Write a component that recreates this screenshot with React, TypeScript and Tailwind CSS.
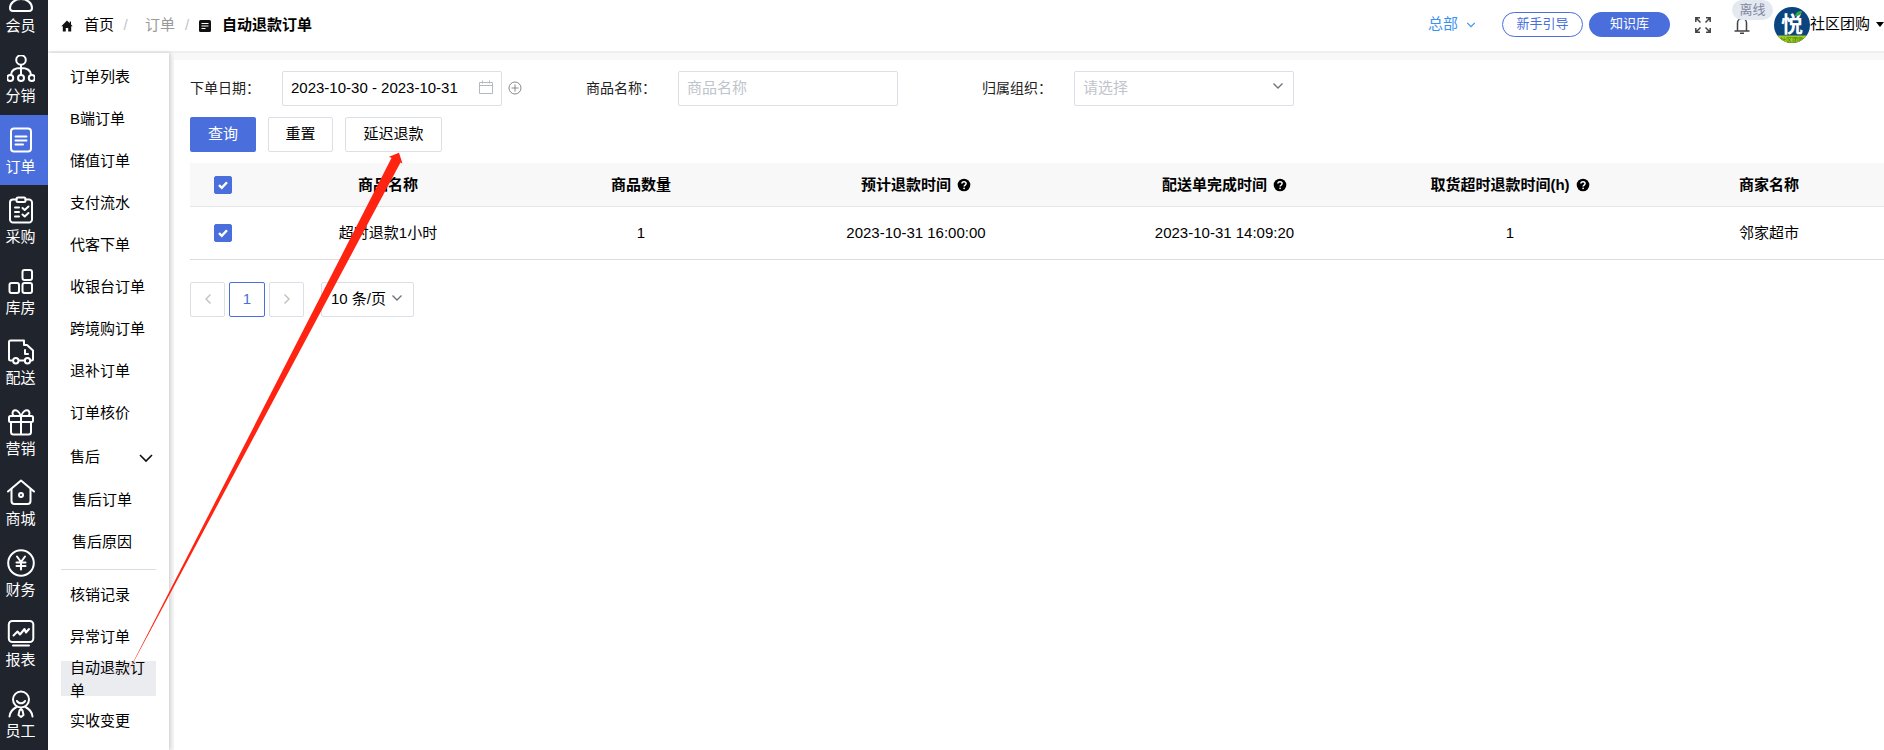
import React from 'react'

type IconProps = { className?: string }

const Line = ({ children }: { children: React.ReactNode }) => (
  <svg viewBox="0 0 28 28" className="size-7 shrink-0" fill="none" stroke="currentColor" strokeWidth="2" strokeLinecap="round" strokeLinejoin="round" aria-hidden="true">
    {children}
  </svg>
)

const modules: { label: string; active?: boolean; icon: React.ReactNode }[] = [
  { label: '会员', icon: <><circle cx="14" cy="7" r="4.500" /><path d="M6 26c-2 0-3-1-3-3 0-5 5-9 11-9s11 4 11 9c0 2-1 3-3 3z" /></> },
  { label: '分销', icon: <><circle cx="14" cy="5" r="4.800" /><path d="M14 10v10M4 19.500c.5-5 5-6.500 10-6.500s9.500 1.500 10 6.500" /><circle cx="3.200" cy="23" r="3" /><circle cx="14" cy="23" r="3" /><circle cx="24.800" cy="23" r="3" /></> },
  { label: '订单', active: true, icon: <><rect x="4" y="2.500" width="20" height="23" rx="3" /><path d="M8.500 10.500h11M8.500 14.500h11M8.500 18.500h7.500" /></> },
  { label: '采购', icon: <><path d="M9.500 3.500H6A3 3 0 0 0 3 6.500v17a3 3 0 0 0 3 3h16a3 3 0 0 0 3-3v-17a3 3 0 0 0-3-3h-3.500" /><rect x="9.500" y="1.500" width="9" height="4.500" rx="1.500" /><path d="M8 11.500h4M8 16h4M8 20.500h4M15.500 12l2.200 2 3.800-3.500M15.500 18.500l2.200 2 3.800-3.500" /></> },
  { label: '库房', icon: <><rect x="15.500" y="3" width="9.500" height="10" rx="2" /><rect x="2.500" y="16" width="9.500" height="10" rx="2" /><rect x="15.500" y="16" width="9.500" height="10" rx="2" /></> },
  { label: '配送', icon: <><path d="M5 23.500H3.500A1.500 1.500 0 0 1 2 22V5a1.500 1.500 0 0 1 1.500-1.500H17V8h3l6 5.500V22a1.500 1.500 0 0 1-1.500 1.500H24M12 23.500h5.500" /><circle cx="8.800" cy="23.800" r="2.700" /><circle cx="20.500" cy="23.800" r="2.700" /><path d="M18 13v4h3" /></> },
  { label: '营销', icon: <><rect x="2" y="8" width="24" height="6" rx="1.500" /><path d="M4 14v10a2.500 2.500 0 0 0 2.500 2.500h15A2.500 2.500 0 0 0 24 24V14M14 8v18.500M14 8C12 3 9 1.500 7 2.500S5 7 7 8M14 8c2-5 5-6.500 7-5.500S23 7 21 8" /></> },
  { label: '商城', icon: <><path d="M1 13.500L14 2.500l13 11" /><path d="M4.500 11v12a3 3 0 0 0 3 3h13a3 3 0 0 0 3-3V11" /><circle cx="14" cy="17" r="2" /></> },
  { label: '财务', icon: <><circle cx="14" cy="14" r="12.800" /><path d="M10 7.500l4 5.500 4-5.500M14 13v7.500M9.500 13.500h9M9.500 17h9" /></> },
  { label: '报表', icon: <><rect x="1.800" y="2" width="24.500" height="21" rx="3.500" /><path d="M6.500 16.500l4-4 2.500 3 4.500-5.500 1.500 3.500 3-3.500M6 26.500h16" /></> },
  { label: '员工', icon: <><circle cx="14" cy="9.500" r="8" /><path d="M10 11c1.500 3 6.500 3 8 0M9.500 17c-4 2-6.500 5-7 9.500M18.500 17c4 2 6.500 5 7 9.500M14 19l-1.500 1.500-1 4.500 2.500 2 2.500-2-1-4.500z" /></> },
]

const Chevron = ({ className }: IconProps) => (
  <svg viewBox="0 0 12 12" className={className} fill="none" stroke="currentColor" strokeWidth="1.400" aria-hidden="true">
    <path d="M1.500 3.500L6 8l4.500-4.500" />
  </svg>
)

const Help = () => (
  <svg viewBox="0 0 14 14" className="ml-1.5 inline-block size-3.5 align-[-2px]" aria-hidden="true">
    <circle cx="7" cy="7" r="6.300" fill="#000" />
    <path d="M4.900 5.600c0-2.600 4.200-2.600 4.200 0 0 1.500-2 1.400-2 3" fill="none" stroke="#fff" strokeWidth="1.500" />
    <circle cx="7.100" cy="10.300" r=".9" fill="#fff" />
  </svg>
)

const topLinks = ['订单列表', 'B端订单', '储值订单', '支付流水', '代客下单', '收银台订单', '跨境购订单', '退补订单', '订单核价']
const bottomLinks = ['核销记录', '异常订单', '自动退款订单', '实收变更']

const SubLink = ({ label, active, nested }: { label: string; active?: boolean; nested?: boolean }) => (
  <a
    href="#"
    aria-current={active ? 'page' : undefined}
    className={`flex h-[35px] items-center pr-1 leading-[23px] ${nested ? 'pl-[11px]' : 'pl-[9px]'} ${active ? 'bg-[#ebecf0]' : ''}`}
  >
    {label}
  </a>
)

const Check = ({ label }: { label: string }) => (
  <span className="relative inline-block size-[18px] align-middle">
    <input type="checkbox" defaultChecked aria-label={label} className="peer block size-[18px] appearance-none rounded-xs border border-[#dcdfe6] bg-white checked:border-[#4a6fdc] checked:bg-[#4a6fdc]" />
    <svg viewBox="0 0 18 18" className="pointer-events-none absolute inset-0 hidden size-[18px] peer-checked:block" fill="none" stroke="#fff" strokeWidth="2.400" aria-hidden="true">
      <path d="M5 9.200l2.800 2.600L13 6.200" />
    </svg>
  </span>
)

const columns = [
  { title: '商品名称' },
  { title: '商品数量' },
  { title: '预计退款时间', help: true },
  { title: '配送单完成时间', help: true },
  { title: '取货超时退款时间(h)', help: true },
  { title: '商家名称' },
]
const rows = [['超时退款1小时', '1', '2023-10-31 16:00:00', '2023-10-31 14:09:20', '1', '邻家超市']]

const field = 'block h-[35px] w-[220px] rounded-xs border border-[#dcdfe6] bg-white px-2 text-[15px] outline-none'
const plain = 'h-[35px] rounded-xs border border-[#dcdfe6] bg-white'

export default function App() {
  return (
    <div className="relative flex h-screen overflow-hidden bg-white font-['Liberation_Sans','Noto_Sans_CJK_SC',sans-serif] text-[15px] text-black">
      <aside className="w-12 shrink-0 overflow-hidden bg-[#20242d] text-white">
        <nav aria-label="模块" className="-mt-[26px] flex min-h-[775px] flex-col">
          {modules.map((m) => (
            <a key={m.label} href="#" className={`flex flex-1 flex-col items-center gap-0.5 pt-[11px] pr-[7px] leading-[22px] ${m.active ? 'bg-[#4a6fdc]' : ''}`}>
              <Line>{m.icon}</Line>
              <span>{m.label}</span>
            </a>
          ))}
        </nav>
      </aside>

      <div className="flex min-w-0 flex-1 flex-col">
        <header className="flex h-[53px] shrink-0 items-center justify-between border-b-2 border-[#f0f0f0] bg-white pb-2 pl-[13px]">
          <nav aria-label="面包屑" className="flex items-center pt-2">
            <svg viewBox="0 0 12 12" className="mr-[11px] size-3" aria-hidden="true">
              <path d="M6 .5L.3 6.200h1.500V11.500h3V8h2.400v3.500h3V6.200h1.500L10 4.500V1.500H8.700v1.700z" fill="#111" />
            </svg>
            <a href="#">首页</a>
            <span className="w-[31px] pr-2 text-center text-[#c0c4cc]">/</span>
            <a href="#" className="text-[#999]">订单</a>
            <span className="w-6 text-center text-[#c0c4cc]">/</span>
            <svg viewBox="0 0 12 12" className="mr-[11px] size-3" aria-hidden="true">
              <rect width="12" height="12" rx="1.500" fill="#111" />
              <path d="M2.500 3.500h7M2.500 6h7M2.500 8.500h4" stroke="#fff" strokeWidth="1.200" />
            </svg>
            <span className="font-bold">自动退款订单</span>
          </nav>

          <div className="flex items-center pt-1.5">
            <button type="button" className="mr-[26px] flex items-center gap-2 text-[#3c92ee]">
              总部
              <Chevron className="size-[10px]" />
            </button>
            <button type="button" className="mr-1.5 h-[25px] w-[81px] rounded-full border border-[#4a6fdc] pb-0.5 text-[13px] leading-none text-[#4a6fdc]">新手引导</button>
            <button type="button" className="mr-[25px] h-[25px] w-[81px] rounded-full bg-[#4a6fdc] pb-0.5 text-[13px] leading-none text-white">知识库</button>
            <button type="button" aria-label="全屏" className="mr-[23px]">
              <svg viewBox="0 0 16 16" className="size-4" fill="none" stroke="#444" strokeWidth="1.500" aria-hidden="true">
                <path d="M.8 5V.8H5M11 .8h4.200V5M15.200 11v4.200H11M5 15.200H.8V11M.8.8l4.700 4.700M15.200.8l-4.700 4.700M15.200 15.200l-4.700-4.700M.8 15.200l4.700-4.700" />
              </svg>
            </button>
            <button type="button" aria-label="通知" className="relative mr-6">
              <svg viewBox="0 0 16 18" className="h-[18px] w-4" fill="none" stroke="#444" strokeWidth="1.500" aria-hidden="true">
                <path d="M3.500 14.500V7a4.500 4.500 0 0 1 9 0v7.500M.5 15h15M6 17.200h4" />
              </svg>
              <span className="absolute -top-4 -left-0.5 w-[41px] rounded-full bg-[#e4e8f1] text-[13px] leading-[20px] text-[#7f87a0]">离线</span>
            </button>
            <button type="button" className="flex items-center">
              <svg viewBox="0 0 36 36" className="size-9" aria-hidden="true">
                <defs><clipPath id="avatar"><circle cx="18" cy="18" r="18" /></clipPath></defs>
                <g clipPath="url(#avatar)">
                  <rect width="36" height="36" fill="#0a4580" />
                  <rect y="28.500" width="36" height="8" fill="#a5cd1b" />
                  <text x="18" y="25" textAnchor="middle" fontSize="22" fontWeight="700" fill="#fff">悦</text>
                  <path d="M21 9c1-4 3-5 7-5 0 3-3 5-7 5z" fill="#2faa4a" />
                  <text x="18" y="34.500" textAnchor="middle" fontSize="6" fill="#3b7d1c">社区团购</text>
                </g>
              </svg>
              <span>社区团购</span>
              <svg viewBox="0 0 8 5" className="ml-1.5 h-[5px] w-2" aria-hidden="true"><path d="M0 0h8L4 5z" /></svg>
            </button>
          </div>
        </header>

        <div className="flex min-h-0 flex-1">
          <aside className="z-10 w-[121px] shrink-0 bg-white px-[13px] pt-1.5 shadow-[2px_0_4px_rgba(0,0,0,0.15)]">
            <nav aria-label="订单" className="flex flex-col gap-[7px]">
              {topLinks.map((l) => <SubLink key={l} label={l} />)}
              <button type="button" className="mt-[3px] flex h-[35px] items-center justify-between pr-[3px] pl-[9px]">
                售后
                <svg viewBox="0 0 14 14" className="size-3.5" fill="none" stroke="#111" strokeWidth="1.600" aria-hidden="true"><path d="M1 4l6 6 6-6" /></svg>
              </button>
              <SubLink label="售后订单" nested />
              <SubLink label="售后原因" nested />
              <hr className="mt-[3px] border-[#dcdcdc]" />
              {bottomLinks.map((l) => <SubLink key={l} label={l} active={l === '自动退款订单'} />)}
            </nav>
          </aside>

          <div className="flex min-w-0 flex-1 bg-[#f8f8f8] pt-[7px] pl-[5px]">
            <main className="min-w-0 flex-1 overflow-hidden bg-white pt-[11px] pl-4">
              <form onSubmit={(e) => e.preventDefault()}>
                <div className="flex">
                  <div className="flex w-[396px] items-center">
                    <label htmlFor="date" className="w-[92px] pb-0.5 text-sm text-[#222]">下单日期：</label>
                    <span className="relative">
                      <input id="date" defaultValue="2023-10-30 - 2023-10-31" className={`${field} pb-0.5`} />
                      <svg viewBox="0 0 14 14" className="pointer-events-none absolute top-[9px] right-[9px] size-3.5" fill="none" stroke="#b4b8c0" aria-hidden="true">
                        <path d="M.5 2.500h13v11H.5zM.5 5.500h13M3.500.5v3M10.500.5v3" />
                      </svg>
                    </span>
                    <button type="button" aria-label="添加" className="ml-1.5 pb-0.5">
                      <svg viewBox="0 0 14 14" className="block size-3.5" fill="none" stroke="#888" aria-hidden="true"><circle cx="7" cy="7" r="6" /><path d="M3.500 7h7M7 3.500v7" /></svg>
                    </button>
                  </div>
                  <div className="flex w-[396px] items-center">
                    <label htmlFor="goods" className="w-[92px] pb-0.5 text-sm text-[#222]">商品名称：</label>
                    <input id="goods" placeholder="商品名称" className={`${field} pb-0.5 placeholder:text-[#c0c4cc]`} />
                  </div>
                  <div className="flex w-[396px] items-center">
                    <label htmlFor="org" className="w-[92px] pb-0.5 text-sm text-[#222]">归属组织：</label>
                    <span className="relative">
                      <select id="org" className={`${field} appearance-none text-[#c0c4cc]`}><option>请选择</option></select>
                      <Chevron className="pointer-events-none absolute top-[9px] right-2.5 size-3 text-[#70747c]" />
                    </span>
                  </div>
                </div>
                <div className="mt-[11px] flex gap-3">
                  <button type="submit" className="h-[35px] w-[66px] rounded-xs bg-[#4a6fdc] text-white">查询</button>
                  <button type="reset" className={`${plain} w-[65px]`}>重置</button>
                  <button type="button" className={`${plain} w-[97px]`}>延迟退款</button>
                </div>
              </form>

              <div className="mt-[11px] overflow-hidden">
                <table className="w-full min-w-[1707px] table-fixed text-center">
                  <colgroup>
                    <col className="w-[66px]" />
                    <col className="w-[264px]" />
                    <col className="w-[242px]" />
                    <col className="w-[308px]" />
                    <col className="w-[309px]" />
                    <col className="w-[262px]" />
                    <col />
                  </colgroup>
                  <thead>
                    <tr className="h-[43px] border-b border-[#e6e6e6] bg-[#f8f8f8]">
                      <th><Check label="全选" /></th>
                      {columns.map((c) => <th key={c.title} className="pt-0.5 font-bold">{c.title}{c.help && <Help />}</th>)}
                    </tr>
                  </thead>
                  <tbody>
                    {rows.map((r) => (
                      <tr key={r[0]} className="h-[53px] border-b border-[#dcdcdc]">
                        <td><Check label={r[0]} /></td>
                        {r.map((v, i) => <td key={i} className="pt-0.5">{v}</td>)}
                      </tr>
                    ))}
                  </tbody>
                </table>
              </div>

              <nav aria-label="分页" className="mt-[22px] flex gap-1">
                <button type="button" aria-label="上一页" className={`${plain} flex w-[35px] items-center justify-center text-[#c0c0c0]`}>
                  <Chevron className="size-3 rotate-90" />
                </button>
                <button type="button" aria-current="page" className="h-[35px] w-9 rounded-xs border border-[#4a6fdc] text-[#4a6fdc]">1</button>
                <button type="button" aria-label="下一页" className={`${plain} flex w-[35px] items-center justify-center text-[#c0c0c0]`}>
                  <Chevron className="size-3 -rotate-90" />
                </button>
                <span className="relative ml-[13px]">
                  <select aria-label="每页条数" className={`${plain} block w-[93px] appearance-none px-[9px]`}><option>10 条/页</option></select>
                  <Chevron className="pointer-events-none absolute top-2.5 right-[11px] size-3 text-[#70747c]" />
                </span>
              </nav>
            </main>
          </div>
        </div>
      </div>

      <svg viewBox="0 0 290 540" className="pointer-events-none absolute top-[145px] left-[120px] z-20 h-[540px] w-[290px]" aria-hidden="true">
        <path d="M4 535L271.500 13 269 11.700 279 7.700 282.500 18.500 280.500 17.500z" fill="#ff2412" />
      </svg>
    </div>
  )
}
